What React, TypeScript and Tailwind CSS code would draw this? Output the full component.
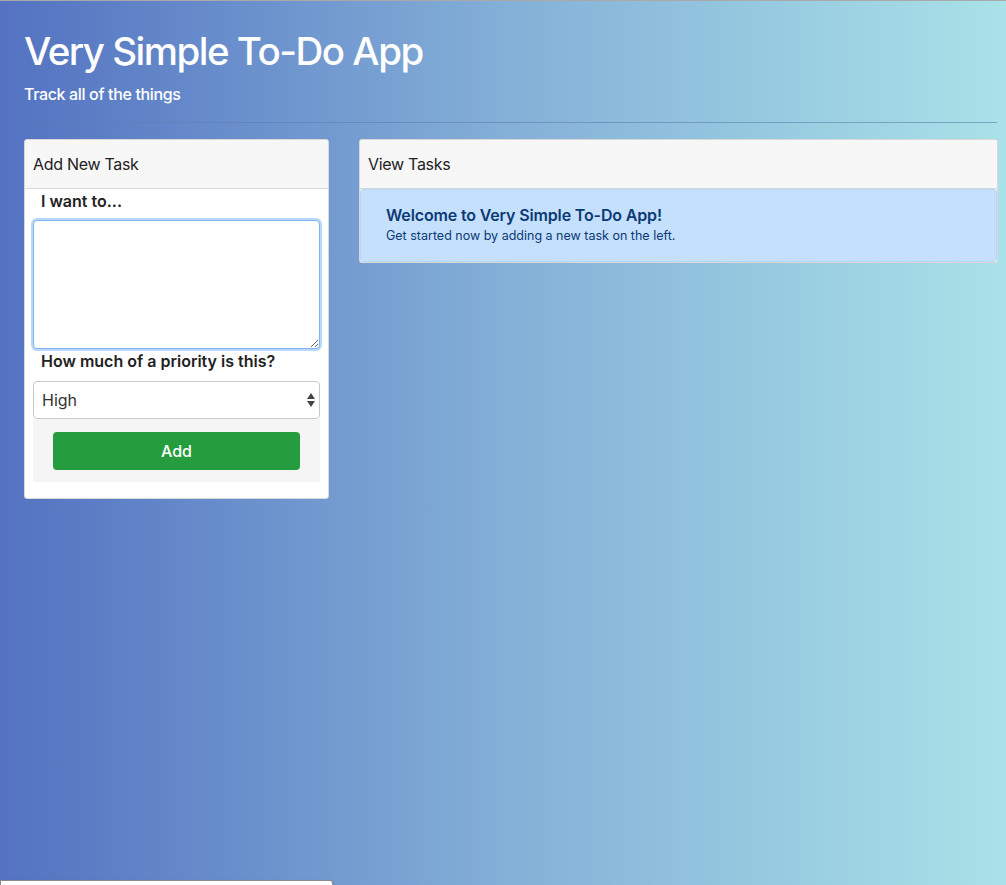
import React from "react";

export default function App() {
  return (
    <div
      className="relative w-[1006px] h-[885px] overflow-hidden border-t border-[#a9a9a9] bg-gradient-to-r from-[#5472c1] via-[#84afd7] to-[#a9e2e8]"
      style={{ fontFamily: "Inter, 'Liberation Sans', Arial, sans-serif" }}
    >
      <div className="pl-[24px] pr-[8px] pt-[26px]">
        <h1 className="text-[38.5px] leading-[48px] font-medium text-white tracking-[-1.5px]">
          Very Simple To-Do App
        </h1>
        <p className="mt-[7px] text-[16px] leading-[24px] font-medium text-white tracking-[-0.35px]">
          Track all of the things
        </p>
        <div className="mt-[16px] h-px bg-[#5f7fae]/60 w-[973px]" />
        <div className="mt-[16px] flex gap-[30px] items-start">
          <div className="w-[305px] bg-white border border-[#d8d8d8] rounded-[3px] overflow-hidden">
            <div className="h-[49px] bg-[#f7f7f7] border-b border-[#dcdcdc] flex items-center px-[8px] text-[16px] text-[#222] tracking-[-0.3px]">
              Add New Task
            </div>
            <div className="px-[8px] pb-[16px]">
              <div className="pl-[8px] pt-0 text-[16px] leading-[24px] font-semibold text-[#222]">
                I want to...
              </div>
              <textarea className="mt-[7px] block w-[287px] h-[129px] rounded-[4px] border border-[#7fb4f0] shadow-[0_0_0_2px_#b9d8fb] outline-none resize-y bg-white" />
              <div className="pl-[8px] pt-0 text-[16px] leading-[24px] font-semibold text-[#222]">
                How much of a priority is this?
              </div>
              <div className="mt-[8px] h-[38px] w-[287px] border border-[#c9c9c9] rounded-[4px] flex items-center justify-between pl-[8px] pr-[3px] text-[16px] text-[#333] bg-white">
                <span>High</span>
                <svg width="10" height="18" viewBox="0 0 10 18">
                  <path d="M5 2 L9 8 L1 8 Z" fill="#444" />
                  <path d="M1 10 L9 10 L5 16 Z" fill="#444" />
                </svg>
              </div>
              <div className="w-[287px] bg-[#f5f5f5] pt-[13px] pb-[12px] flex justify-center">
                <button className="w-[247px] h-[38px] rounded-[4px] bg-[#259d3f] text-white text-[16px] font-medium">
                  Add
                </button>
              </div>
            </div>
          </div>
          <div className="w-[639px] bg-white border border-[#d8d8d8] rounded-[3px] overflow-hidden">
            <div className="h-[49px] bg-[#f7f7f7] border-b border-[#d0d8e0] flex items-center px-[8px] text-[16px] text-[#222] tracking-[-0.3px]">
              View Tasks
            </div>
            <div className="h-[73px] bg-[#c5e0fd] border border-[#b8d5f5] rounded-[3px] pl-[25px] pt-[15px]">
              <div className="text-[16px] leading-[20px] font-semibold text-[#0b3a75] tracking-[-0.15px]">
                Welcome to Very Simple To-Do App!
              </div>
              <div className="mt-[3px] text-[12.5px] leading-[16px] text-[#0b3a75]">
                Get started now by adding a new task on the left.
              </div>
            </div>
          </div>
        </div>
      </div>
      <div className="absolute left-0 top-[879px] w-[333px] h-[10px] bg-white border border-[#8a8a8a] rounded-tr-[3px] shadow" />
    </div>
  );
}
